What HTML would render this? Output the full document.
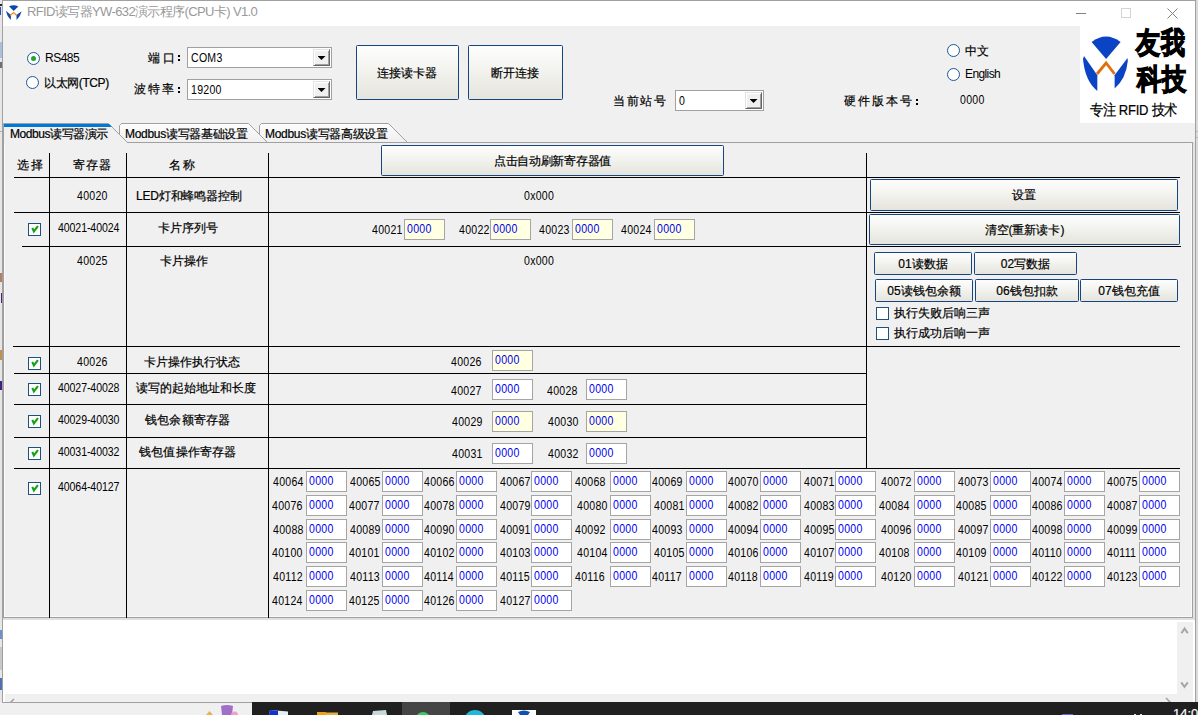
<!DOCTYPE html><html><head><meta charset="utf-8"><title>RFID</title><style>
*{margin:0;padding:0;box-sizing:border-box}
html,body{width:1198px;height:715px;overflow:hidden;background:#f0f0f0}
body{position:relative;font-family:"Liberation Sans",sans-serif;font-size:12px;color:#000;-webkit-text-stroke-width:0.2px}
div{position:absolute}
svg{position:absolute}
.t{white-space:nowrap;line-height:12px;font-size:12px}
.d{margin-left:0.2px;white-space:nowrap;line-height:12px;font-size:12px;letter-spacing:0.3px;-webkit-text-stroke-width:0;transform:scaleX(0.88);transform-origin:0 0}
.v{display:inline-block;letter-spacing:0.3px;transform:scaleX(0.88);transform-origin:0 0}
.btn{border:1px solid #17457f;border-radius:1.5px;background:linear-gradient(#fdfdfd,#f3f3ef 45%,#e5e4dd);text-align:center;white-space:nowrap;font-size:12px}
.inp,.inpy{border:1px solid #a5a5a5;background:#fff;color:#0000f0;font-size:12px;line-height:12px;padding:3px 0 0 2px;-webkit-text-stroke-width:0}
.inpy{background:#ffffe1}
.cb{width:13px;height:13px;border:1px solid #1c5180;background:#fff}
.cb svg{left:1px;top:1px}
.rd{width:13px;height:13px;border:1px solid #1d5798;border-radius:50%;background:#fff}
.combo{border:1px solid #a0a0a0;background:#fff}
.dd{width:17px;height:17px;background:#f0f0f0;border-top:1px solid #e3e3e3;border-left:1px solid #e3e3e3;border-right:1px solid #646464;border-bottom:1px solid #646464;box-shadow:inset 1px 1px 0 #fff,inset -1px -1px 0 #a0a0a0}
.dd:after{content:"";position:absolute;left:3.5px;top:6px;width:8px;height:4px;background:#000;clip-path:polygon(0 0,100% 0,50% 100%)}
</style></head><body>
<div style="left:0px;top:0px;width:3px;height:702px;background:#e6e6e6"></div>
<div style="left:0px;top:4px;width:2px;height:2px;background:#2a2a2a"></div>
<div style="left:0px;top:7px;width:1px;height:8px;background:#2050b0"></div>
<div style="left:0px;top:42px;width:2px;height:16px;background:#a8c0e0"></div>
<div style="left:0px;top:62px;width:2px;height:6px;background:#707070"></div>
<div style="left:0px;top:131px;width:3px;height:1px;background:#b0b0b0"></div>
<div style="left:0px;top:273px;width:2px;height:9px;background:#b08060"></div>
<div style="left:1px;top:293px;width:1px;height:10px;background:#502070"></div>
<div style="left:0px;top:350px;width:2px;height:10px;background:#c09050"></div>
<div style="left:0px;top:381px;width:2px;height:9px;background:#402080"></div>
<div style="left:0px;top:630px;width:2px;height:9px;background:#7090c8"></div>
<div style="left:0px;top:647px;width:2px;height:23px;background:#c8c8c8"></div>
<div style="left:0px;top:678px;width:2px;height:12px;background:#5070b0"></div>
<div style="left:2px;top:0px;width:1194px;height:703px;border:1px solid #a0a0a0;background:#f0f0f0"></div>
<div style="left:3px;top:1px;width:1192px;height:25px;background:#fff"></div>
<div style="left:1196px;top:0px;width:2px;height:702px;background:#dadada"></div>
<div style="left:1196px;top:131px;width:2px;height:1px;background:#b8b8b8"></div>
<div style="left:1196px;top:137px;width:2px;height:1px;background:#b8b8b8"></div>
<svg style="left:5px;top:4px" width="17" height="17" viewBox="0 0 17 17">
<path d="M4 2.3 Q8.7 0.2 13.3 2.4 L8.7 7 Z" fill="#0b4aa8"/>
<path d="M0.8 6.8 L6 11 L5.8 16 Q2 12.5 0.8 6.8 Z" fill="#0b4aa8"/>
<path d="M16.6 7.2 L11.4 11 L11.6 16 Q15.4 12.5 16.6 7.2 Z" fill="#0b4aa8"/>
<path d="M5.2 11.5 L8.5 8.6 L11.8 11.5" stroke="#ef8a1e" stroke-width="1.2" fill="none"/>
</svg>
<div class="t" style="left:27px;top:5px;color:#999;-webkit-text-stroke-width:0;font-size:13px;line-height:14px;letter-spacing:-0.62px">RFID读写器YW-632演示程序(CPU卡) V1.0</div>
<div style="left:1076px;top:13px;width:10px;height:1px;background:#808080"></div>
<div style="left:1121px;top:8px;width:10px;height:10px;border:1px solid #d4d4d4"></div>
<svg style="left:1167px;top:8px" width="11" height="11" viewBox="0 0 11 11">
<path d="M0.5 0.5 L10.5 10.5 M10.5 0.5 L0.5 10.5" stroke="#808080" stroke-width="1"/></svg>
<div class="rd" style="left:27px;top:52px;width:13px;height:13px;"><div style="left:3px;top:3px;width:5px;height:5px;border-radius:50%;background:#22a52a"></div></div>
<div class="t" style="left:45px;top:52px;letter-spacing:-0.5px;-webkit-text-stroke-width:0">RS485</div>
<div class="rd" style="left:26px;top:76px;width:13px;height:13px;"></div>
<div class="t" style="left:44px;top:77px;letter-spacing:-0.4px">以太网(TCP)</div>
<div class="t" style="left:148px;top:52px;letter-spacing:2.5px">端口</div>
<div style="left:178px;top:55px;width:2px;height:2px;background:#000"></div>
<div style="left:178px;top:59px;width:2px;height:2px;background:#000"></div>
<div class="t" style="left:134px;top:83px;letter-spacing:2px">波特率</div>
<div style="left:178px;top:87px;width:2px;height:2px;background:#000"></div>
<div style="left:178px;top:91px;width:2px;height:2px;background:#000"></div>
<div class="combo" style="left:187px;top:47px;width:145px;height:21px;"><div class="d" style="left:3px;top:4px">COM3</div><div class="dd" style="left:125px;top:1px"></div></div>
<div class="combo" style="left:187px;top:79px;width:145px;height:21px;"><div class="d" style="left:3px;top:4px">19200</div><div class="dd" style="left:125px;top:1px"></div></div>
<div class="btn" style="left:356px;top:45px;width:103px;height:55px;line-height:54px;padding-right:2px">连接读卡器</div>
<div class="btn" style="left:468px;top:45px;width:95px;height:55px;line-height:54px;padding-right:2px">断开连接</div>
<div class="t" style="left:613px;top:95px;letter-spacing:1.7px">当前站号</div>
<div class="combo" style="left:675px;top:90px;width:89px;height:21px;"><div class="d" style="left:3px;top:4px">0</div><div class="dd" style="left:69px;top:1px"></div></div>
<div class="rd" style="left:947px;top:44px;width:13px;height:13px;"></div>
<div class="t" style="left:965px;top:45px;">中文</div>
<div class="rd" style="left:947px;top:68px;width:13px;height:13px;"></div>
<div class="t" style="left:965px;top:68px;letter-spacing:-0.6px;-webkit-text-stroke-width:0">English</div>
<div class="t" style="left:844px;top:95px;letter-spacing:2px">硬件版本号</div>
<div style="left:916px;top:99px;width:2px;height:2px;background:#000"></div>
<div style="left:916px;top:103px;width:2px;height:2px;background:#000"></div>
<div class="d" style="left:960px;top:94px;">0000</div>
<div style="left:1080px;top:26px;width:115px;height:97px;background:#fff"></div>
<svg style="left:1080px;top:26px" width="60" height="70" viewBox="0 0 60 70">
<path d="M11.6 16.1 Q26 5 40.6 16.1 L26.1 32.9 Z" fill="#0a44c4"/>
<path d="M4 30 L17.3 49.3 L17.3 65 Q5 55 3 33 Z" fill="#0a44c4"/>
<path d="M47.5 32 L34.6 49.3 L34.6 62.5 Q46 53 47.8 35 Z" fill="#0a44c4"/>
<path d="M17 48 L26.1 37 L34.6 48" stroke="#e0700c" stroke-width="2.8" fill="none"/>
</svg>
<div class="t" style="left:1135.5px;top:28px;font-size:24px;line-height:24px;font-weight:700;letter-spacing:1px;-webkit-text-stroke:1px #000;transform-origin:0 0;transform:scaleY(1.25)">友我</div>
<div class="t" style="left:1136.5px;top:65px;font-size:24px;line-height:24px;font-weight:700;letter-spacing:1px;-webkit-text-stroke:1px #000;transform-origin:0 0;transform:scaleY(1.2)">科技</div>
<div class="t" style="left:1090px;top:104px;font-size:13px;line-height:14px;letter-spacing:-0.25px;transform-origin:0 100%;transform:scaleY(1.13)">专注 RFID 技术</div>
<div style="left:3px;top:142px;width:1190px;height:476px;border:1px solid #a0a0a0;border-top:none;background:#f0f0f0"></div>
<div style="left:4px;top:143px;width:1188px;height:474px;border-left:1px solid #fafafa;border-right:1px solid #fafafa;border-bottom:1px solid #fafafa"></div>
<div style="left:1193px;top:142px;width:2px;height:478px;background:#e3e3e3"></div>
<svg style="left:0;top:118px" width="420" height="26" viewBox="0 118 420 26">
<defs><linearGradient id="tg" x1="0" y1="0" x2="0" y2="1"><stop offset="0" stop-color="#fdfdfd"/><stop offset="1" stop-color="#efefef"/></linearGradient></defs>
<path d="M259.5 142.5 L259.5 125.5 L261.5 123.5 L388.5 123.5 L407.5 142.5" fill="url(#tg)" stroke="#a0a0a0" stroke-width="1"/>
<path d="M119.5 142.5 L119.5 125.5 L121.5 123.5 L248.5 123.5 L267.5 142.5" fill="url(#tg)" stroke="#a0a0a0" stroke-width="1"/>
<path d="M3.5 143 L3.5 123.5 L108.5 123.5 L127.5 142.5 L127.5 143 Z" fill="#f0f0f0" stroke="none"/>
<path d="M3.5 143 L3.5 123.5 L108.5 123.5 L127.5 142.5" fill="none" stroke="#a0a0a0" stroke-width="1"/>
<path d="M4 124 L109 124 L112 127 L4 127 Z" fill="#0078d7"/>
</svg>
<div style="left:127px;top:142px;width:1066px;height:1px;background:#a0a0a0"></div>
<div class="t" style="left:10px;top:128px;letter-spacing:-0.45px">Modbus读写器演示</div>
<div class="t" style="left:125px;top:128px;letter-spacing:-0.3px">Modbus读写器基础设置</div>
<div class="t" style="left:265px;top:128px;letter-spacing:-0.3px">Modbus读写器高级设置</div>
<div style="left:49px;top:153px;width:1px;height:465px;background:#000"></div>
<div style="left:126px;top:153px;width:1px;height:465px;background:#000"></div>
<div style="left:268px;top:153px;width:1px;height:465px;background:#000"></div>
<div style="left:866px;top:153px;width:1px;height:316px;background:#000"></div>
<div style="left:14px;top:177px;width:1166px;height:1px;background:#000"></div>
<div style="left:14px;top:212px;width:1166px;height:1px;background:#000"></div>
<div style="left:22px;top:246px;width:1159px;height:1px;background:#000"></div>
<div style="left:13px;top:346px;width:1167px;height:1px;background:#000"></div>
<div style="left:14px;top:373px;width:853px;height:1px;background:#000"></div>
<div style="left:14px;top:404px;width:853px;height:1px;background:#000"></div>
<div style="left:14px;top:437px;width:853px;height:1px;background:#000"></div>
<div style="left:14px;top:468px;width:1166px;height:1px;background:#000"></div>
<div class="t" style="left:17px;top:159px;letter-spacing:2px">选择</div>
<div class="t" style="left:73px;top:159px;letter-spacing:1.2px">寄存器</div>
<div class="t" style="left:169px;top:159px;letter-spacing:2px">名称</div>
<div class="btn" style="left:381px;top:145px;width:343px;height:31px;line-height:30px;letter-spacing:-0.3px">点击自动刷新寄存器值</div>
<div class="d" style="left:77px;top:190px;">40020</div>
<div class="t" style="left:136px;top:190px;letter-spacing:-0.2px">LED灯和蜂鸣器控制</div>
<div class="d" style="left:524px;top:190px;">0x000</div>
<div class="btn" style="left:870px;top:179px;width:308px;height:32px;line-height:31px">设置</div>
<div class="cb" style="left:28px;top:223px;width:13px;height:13px;"><svg width="11" height="11" viewBox="0 0 11 11"><path d="M2.3 2.9 L3.9 6.5 L7.9 1.2" stroke="#16a016" stroke-width="2.1" fill="none"/></svg></div>
<div class="d" style="left:58px;top:222px;letter-spacing:-0.1px">40021-40024</div>
<div class="t" style="left:158px;top:222px;">卡片序列号</div>
<div class="d" style="left:372px;top:224px;">40021</div>
<div class="inpy" style="left:404px;top:219px;width:41px;height:21px;"><span class="v">0000</span></div>
<div class="d" style="left:459px;top:224px;">40022</div>
<div class="inpy" style="left:490px;top:219px;width:41px;height:21px;"><span class="v">0000</span></div>
<div class="d" style="left:539px;top:224px;">40023</div>
<div class="inpy" style="left:572px;top:219px;width:41px;height:21px;"><span class="v">0000</span></div>
<div class="d" style="left:621px;top:224px;">40024</div>
<div class="inpy" style="left:654px;top:219px;width:41px;height:21px;"><span class="v">0000</span></div>
<div class="btn" style="left:869px;top:214px;width:311px;height:31px;line-height:30px">清空(重新读卡)</div>
<div class="d" style="left:77px;top:255px;">40025</div>
<div class="t" style="left:160px;top:255px;">卡片操作</div>
<div class="d" style="left:524px;top:255px;">0x000</div>
<div class="btn" style="left:874px;top:252px;width:98px;height:23px;line-height:22px">01读数据</div>
<div class="btn" style="left:974px;top:252px;width:103px;height:23px;line-height:22px">02写数据</div>
<div class="btn" style="left:875px;top:279px;width:98px;height:23px;line-height:22px">05读钱包余额</div>
<div class="btn" style="left:975px;top:279px;width:104px;height:23px;line-height:22px">06钱包扣款</div>
<div class="btn" style="left:1080px;top:279px;width:98px;height:23px;line-height:22px">07钱包充值</div>
<div class="cb" style="left:876px;top:307px;width:13px;height:13px;"></div>
<div class="t" style="left:894px;top:307px;">执行失败后响三声</div>
<div class="cb" style="left:876px;top:327px;width:13px;height:13px;"></div>
<div class="t" style="left:894px;top:327px;">执行成功后响一声</div>
<div class="cb" style="left:28px;top:357px;width:13px;height:13px;"><svg width="11" height="11" viewBox="0 0 11 11"><path d="M2.3 2.9 L3.9 6.5 L7.9 1.2" stroke="#16a016" stroke-width="2.1" fill="none"/></svg></div>
<div class="d" style="left:77px;top:356px;">40026</div>
<div class="t" style="left:144px;top:356px;">卡片操作执行状态</div>
<div class="d" style="left:451px;top:356px;">40026</div>
<div class="inpy" style="left:492px;top:350px;width:41px;height:21px;"><span class="v">0000</span></div>
<div class="cb" style="left:28px;top:383px;width:13px;height:13px;"><svg width="11" height="11" viewBox="0 0 11 11"><path d="M2.3 2.9 L3.9 6.5 L7.9 1.2" stroke="#16a016" stroke-width="2.1" fill="none"/></svg></div>
<div class="d" style="left:58px;top:382px;letter-spacing:-0.1px">40027-40028</div>
<div class="t" style="left:136px;top:382px;">读写的起始地址和长度</div>
<div class="d" style="left:451px;top:385px;">40027</div>
<div class="inp" style="left:492px;top:379px;width:41px;height:21px;"><span class="v">0000</span></div>
<div class="d" style="left:547px;top:385px;">40028</div>
<div class="inp" style="left:586px;top:379px;width:41px;height:21px;"><span class="v">0000</span></div>
<div class="cb" style="left:28px;top:415px;width:13px;height:13px;"><svg width="11" height="11" viewBox="0 0 11 11"><path d="M2.3 2.9 L3.9 6.5 L7.9 1.2" stroke="#16a016" stroke-width="2.1" fill="none"/></svg></div>
<div class="d" style="left:58px;top:414px;letter-spacing:-0.1px">40029-40030</div>
<div class="t" style="left:145px;top:414px;letter-spacing:0.2px">钱包余额寄存器</div>
<div class="d" style="left:452px;top:416px;">40029</div>
<div class="inpy" style="left:492px;top:411px;width:41px;height:21px;"><span class="v">0000</span></div>
<div class="d" style="left:548px;top:416px;">40030</div>
<div class="inpy" style="left:586px;top:411px;width:41px;height:21px;"><span class="v">0000</span></div>
<div class="cb" style="left:28px;top:447px;width:13px;height:13px;"><svg width="11" height="11" viewBox="0 0 11 11"><path d="M2.3 2.9 L3.9 6.5 L7.9 1.2" stroke="#16a016" stroke-width="2.1" fill="none"/></svg></div>
<div class="d" style="left:58px;top:446px;letter-spacing:-0.1px">40031-40032</div>
<div class="t" style="left:139px;top:446px;letter-spacing:0.2px">钱包值操作寄存器</div>
<div class="d" style="left:452px;top:448px;">40031</div>
<div class="inp" style="left:492px;top:443px;width:41px;height:21px;"><span class="v">0000</span></div>
<div class="d" style="left:548px;top:448px;">40032</div>
<div class="inp" style="left:586px;top:443px;width:41px;height:21px;"><span class="v">0000</span></div>
<div class="cb" style="left:28px;top:482px;width:13px;height:13px;"><svg width="11" height="11" viewBox="0 0 11 11"><path d="M2.3 2.9 L3.9 6.5 L7.9 1.2" stroke="#16a016" stroke-width="2.1" fill="none"/></svg></div>
<div class="d" style="left:58px;top:481px;letter-spacing:-0.1px">40064-40127</div>
<div class="d" style="left:273.0px;top:476px">40064</div>
<div class="inp" style="left:306px;top:471px;width:41px;height:21px;"><span class="v">0000</span></div>
<div class="d" style="left:350.2px;top:476px">40065</div>
<div class="inp" style="left:382px;top:471px;width:41px;height:21px;"><span class="v">0000</span></div>
<div class="d" style="left:424.2px;top:476px">40066</div>
<div class="inp" style="left:456px;top:471px;width:41px;height:21px;"><span class="v">0000</span></div>
<div class="d" style="left:499.5px;top:476px">40067</div>
<div class="inp" style="left:531px;top:471px;width:41px;height:21px;"><span class="v">0000</span></div>
<div class="d" style="left:575.1px;top:476px">40068</div>
<div class="inp" style="left:610px;top:471px;width:41px;height:21px;"><span class="v">0000</span></div>
<div class="d" style="left:652.0px;top:476px">40069</div>
<div class="inp" style="left:686px;top:471px;width:41px;height:21px;"><span class="v">0000</span></div>
<div class="d" style="left:728.1px;top:476px">40070</div>
<div class="inp" style="left:760px;top:471px;width:41px;height:21px;"><span class="v">0000</span></div>
<div class="d" style="left:803.4px;top:476px">40071</div>
<div class="inp" style="left:835px;top:471px;width:41px;height:21px;"><span class="v">0000</span></div>
<div class="d" style="left:881.2px;top:476px">40072</div>
<div class="inp" style="left:914px;top:471px;width:41px;height:21px;"><span class="v">0000</span></div>
<div class="d" style="left:957.9px;top:476px">40073</div>
<div class="inp" style="left:990px;top:471px;width:41px;height:21px;"><span class="v">0000</span></div>
<div class="d" style="left:1032.1px;top:476px">40074</div>
<div class="inp" style="left:1064px;top:471px;width:41px;height:21px;"><span class="v">0000</span></div>
<div class="d" style="left:1106.9px;top:476px">40075</div>
<div class="inp" style="left:1139px;top:471px;width:41px;height:21px;"><span class="v">0000</span></div>
<div class="d" style="left:271.7px;top:500px">40076</div>
<div class="inp" style="left:306px;top:495px;width:41px;height:21px;"><span class="v">0000</span></div>
<div class="d" style="left:348.4px;top:500px">40077</div>
<div class="inp" style="left:382px;top:495px;width:41px;height:21px;"><span class="v">0000</span></div>
<div class="d" style="left:424.2px;top:500px">40078</div>
<div class="inp" style="left:456px;top:495px;width:41px;height:21px;"><span class="v">0000</span></div>
<div class="d" style="left:499.5px;top:500px">40079</div>
<div class="inp" style="left:531px;top:495px;width:41px;height:21px;"><span class="v">0000</span></div>
<div class="d" style="left:577.2px;top:500px">40080</div>
<div class="inp" style="left:610px;top:495px;width:41px;height:21px;"><span class="v">0000</span></div>
<div class="d" style="left:654.1px;top:500px">40081</div>
<div class="inp" style="left:686px;top:495px;width:41px;height:21px;"><span class="v">0000</span></div>
<div class="d" style="left:728.1px;top:500px">40082</div>
<div class="inp" style="left:760px;top:495px;width:41px;height:21px;"><span class="v">0000</span></div>
<div class="d" style="left:803.4px;top:500px">40083</div>
<div class="inp" style="left:835px;top:495px;width:41px;height:21px;"><span class="v">0000</span></div>
<div class="d" style="left:879.1px;top:500px">40084</div>
<div class="inp" style="left:914px;top:495px;width:41px;height:21px;"><span class="v">0000</span></div>
<div class="d" style="left:956.0px;top:500px">40085</div>
<div class="inp" style="left:990px;top:495px;width:41px;height:21px;"><span class="v">0000</span></div>
<div class="d" style="left:1032.1px;top:500px">40086</div>
<div class="inp" style="left:1064px;top:495px;width:41px;height:21px;"><span class="v">0000</span></div>
<div class="d" style="left:1106.9px;top:500px">40087</div>
<div class="inp" style="left:1139px;top:495px;width:41px;height:21px;"><span class="v">0000</span></div>
<div class="d" style="left:273.0px;top:524px">40088</div>
<div class="inp" style="left:306px;top:519px;width:41px;height:21px;"><span class="v">0000</span></div>
<div class="d" style="left:350.2px;top:524px">40089</div>
<div class="inp" style="left:382px;top:519px;width:41px;height:21px;"><span class="v">0000</span></div>
<div class="d" style="left:424.2px;top:524px">40090</div>
<div class="inp" style="left:456px;top:519px;width:41px;height:21px;"><span class="v">0000</span></div>
<div class="d" style="left:499.5px;top:524px">40091</div>
<div class="inp" style="left:531px;top:519px;width:41px;height:21px;"><span class="v">0000</span></div>
<div class="d" style="left:575.1px;top:524px">40092</div>
<div class="inp" style="left:610px;top:519px;width:41px;height:21px;"><span class="v">0000</span></div>
<div class="d" style="left:652.0px;top:524px">40093</div>
<div class="inp" style="left:686px;top:519px;width:41px;height:21px;"><span class="v">0000</span></div>
<div class="d" style="left:728.1px;top:524px">40094</div>
<div class="inp" style="left:760px;top:519px;width:41px;height:21px;"><span class="v">0000</span></div>
<div class="d" style="left:803.4px;top:524px">40095</div>
<div class="inp" style="left:835px;top:519px;width:41px;height:21px;"><span class="v">0000</span></div>
<div class="d" style="left:881.2px;top:524px">40096</div>
<div class="inp" style="left:914px;top:519px;width:41px;height:21px;"><span class="v">0000</span></div>
<div class="d" style="left:957.9px;top:524px">40097</div>
<div class="inp" style="left:990px;top:519px;width:41px;height:21px;"><span class="v">0000</span></div>
<div class="d" style="left:1032.1px;top:524px">40098</div>
<div class="inp" style="left:1064px;top:519px;width:41px;height:21px;"><span class="v">0000</span></div>
<div class="d" style="left:1106.9px;top:524px">40099</div>
<div class="inp" style="left:1139px;top:519px;width:41px;height:21px;"><span class="v">0000</span></div>
<div class="d" style="left:271.7px;top:547px">40100</div>
<div class="inp" style="left:306px;top:542px;width:41px;height:21px;"><span class="v">0000</span></div>
<div class="d" style="left:348.4px;top:547px">40101</div>
<div class="inp" style="left:382px;top:542px;width:41px;height:21px;"><span class="v">0000</span></div>
<div class="d" style="left:424.2px;top:547px">40102</div>
<div class="inp" style="left:456px;top:542px;width:41px;height:21px;"><span class="v">0000</span></div>
<div class="d" style="left:499.5px;top:547px">40103</div>
<div class="inp" style="left:531px;top:542px;width:41px;height:21px;"><span class="v">0000</span></div>
<div class="d" style="left:577.2px;top:547px">40104</div>
<div class="inp" style="left:610px;top:542px;width:41px;height:21px;"><span class="v">0000</span></div>
<div class="d" style="left:654.1px;top:547px">40105</div>
<div class="inp" style="left:686px;top:542px;width:41px;height:21px;"><span class="v">0000</span></div>
<div class="d" style="left:728.1px;top:547px">40106</div>
<div class="inp" style="left:760px;top:542px;width:41px;height:21px;"><span class="v">0000</span></div>
<div class="d" style="left:803.4px;top:547px">40107</div>
<div class="inp" style="left:835px;top:542px;width:41px;height:21px;"><span class="v">0000</span></div>
<div class="d" style="left:879.1px;top:547px">40108</div>
<div class="inp" style="left:914px;top:542px;width:41px;height:21px;"><span class="v">0000</span></div>
<div class="d" style="left:956.0px;top:547px">40109</div>
<div class="inp" style="left:990px;top:542px;width:41px;height:21px;"><span class="v">0000</span></div>
<div class="d" style="left:1032.1px;top:547px">40110</div>
<div class="inp" style="left:1064px;top:542px;width:41px;height:21px;"><span class="v">0000</span></div>
<div class="d" style="left:1106.9px;top:547px">40111</div>
<div class="inp" style="left:1139px;top:542px;width:41px;height:21px;"><span class="v">0000</span></div>
<div class="d" style="left:273.0px;top:571px">40112</div>
<div class="inp" style="left:306px;top:566px;width:41px;height:21px;"><span class="v">0000</span></div>
<div class="d" style="left:350.2px;top:571px">40113</div>
<div class="inp" style="left:382px;top:566px;width:41px;height:21px;"><span class="v">0000</span></div>
<div class="d" style="left:424.2px;top:571px">40114</div>
<div class="inp" style="left:456px;top:566px;width:41px;height:21px;"><span class="v">0000</span></div>
<div class="d" style="left:499.5px;top:571px">40115</div>
<div class="inp" style="left:531px;top:566px;width:41px;height:21px;"><span class="v">0000</span></div>
<div class="d" style="left:575.1px;top:571px">40116</div>
<div class="inp" style="left:610px;top:566px;width:41px;height:21px;"><span class="v">0000</span></div>
<div class="d" style="left:652.0px;top:571px">40117</div>
<div class="inp" style="left:686px;top:566px;width:41px;height:21px;"><span class="v">0000</span></div>
<div class="d" style="left:728.1px;top:571px">40118</div>
<div class="inp" style="left:760px;top:566px;width:41px;height:21px;"><span class="v">0000</span></div>
<div class="d" style="left:803.4px;top:571px">40119</div>
<div class="inp" style="left:835px;top:566px;width:41px;height:21px;"><span class="v">0000</span></div>
<div class="d" style="left:881.2px;top:571px">40120</div>
<div class="inp" style="left:914px;top:566px;width:41px;height:21px;"><span class="v">0000</span></div>
<div class="d" style="left:957.9px;top:571px">40121</div>
<div class="inp" style="left:990px;top:566px;width:41px;height:21px;"><span class="v">0000</span></div>
<div class="d" style="left:1032.1px;top:571px">40122</div>
<div class="inp" style="left:1064px;top:566px;width:41px;height:21px;"><span class="v">0000</span></div>
<div class="d" style="left:1106.9px;top:571px">40123</div>
<div class="inp" style="left:1139px;top:566px;width:41px;height:21px;"><span class="v">0000</span></div>
<div class="d" style="left:271.7px;top:595px">40124</div>
<div class="inp" style="left:306px;top:590px;width:41px;height:21px;"><span class="v">0000</span></div>
<div class="d" style="left:348.4px;top:595px">40125</div>
<div class="inp" style="left:382px;top:590px;width:41px;height:21px;"><span class="v">0000</span></div>
<div class="d" style="left:424.2px;top:595px">40126</div>
<div class="inp" style="left:456px;top:590px;width:41px;height:21px;"><span class="v">0000</span></div>
<div class="d" style="left:499.5px;top:595px">40127</div>
<div class="inp" style="left:531px;top:590px;width:41px;height:21px;"><span class="v">0000</span></div>
<div style="left:3px;top:618px;width:1192px;height:2px;background:#e0e0e0"></div>
<div style="left:3px;top:620px;width:1192px;height:82px;background:#fff"></div>
<div style="left:1177px;top:622px;width:16px;height:80px;background:#f0f0f0"></div>
<svg style="left:1180px;top:626px" width="10" height="9" viewBox="0 0 10 9"><path d="M1.4 7.2 L4.6 2.6 L7.8 7.2" stroke="#a6a6a6" stroke-width="2" fill="none"/></svg>
<svg style="left:1180px;top:681px" width="10" height="9" viewBox="0 0 10 9"><path d="M1.2 1.4 L4.5 5.9 L7.8 1.4" stroke="#a6a6a6" stroke-width="2" fill="none"/></svg>
<div style="left:5px;top:694px;width:1188px;height:8px;background:#f0f0f0"></div>
<svg style="left:8px;top:696px" width="10" height="7" viewBox="0 0 10 7"><path d="M2 7 L6 3" stroke="#a6a6a6" stroke-width="1.7" fill="none"/></svg>
<svg style="left:1163px;top:696px" width="10" height="7" viewBox="0 0 10 7"><path d="M3 2 L8 7" stroke="#a6a6a6" stroke-width="1.7" fill="none"/></svg>
<div style="left:0px;top:703px;width:252px;height:12px;background:#f0f0f0"></div>
<div style="left:3px;top:702px;width:249px;height:1px;background:#a0a0a0"></div>
<svg style="left:200px;top:703px" width="45" height="12" viewBox="0 0 45 12">
<path d="M6 12 L9.5 8 L13 12 Z" fill="#e8b050"/>
<path d="M21 3 Q27 1 33 3 L32 12 L22 12 Z" fill="#a070c8"/>
<circle cx="34.5" cy="12" r="3.5" fill="#f0a0d0"/>
</svg>
<div style="left:252px;top:702px;width:946px;height:13px;background:#202020"></div>
<div style="left:402px;top:702px;width:48px;height:13px;background:#454545"></div>
<svg style="left:252px;top:702px" width="946" height="13" viewBox="252 702 946 13">
<path d="M270 710 L288 711.5 L288 715 L269 715 Z" fill="#e8eef8"/>
<path d="M270 710 L278 710.7 L278 715 L269 715 Z" fill="#1030d0"/>
<rect x="317" y="712.5" width="21" height="3" fill="#e6b040"/>
<rect x="317" y="712" width="9" height="3" fill="#f0a010"/>
<path d="M373 711 L386 710 L387 715 L372 715 Z" fill="#c8d8d8"/>
<circle cx="423" cy="719.5" r="7.5" fill="#3ccc60"/>
<circle cx="475" cy="721" r="11" fill="#20b8d8"/>
<rect x="512" y="710" width="24" height="5" fill="#fff"/>
<path d="M518 712 Q524 709 530 712 L528 715 L520 715 Z" fill="#1050b0"/>
<rect x="1062" y="714" width="11" height="1" fill="#5a6af0"/>
<rect x="1134" y="714" width="2" height="1" fill="#ddd"/>
<rect x="1140" y="714" width="2" height="1" fill="#ddd"/>
</svg>
<div class="t" style="left:1173px;top:707px;color:#fff;font-size:13px;line-height:13px">14:07</div>
</body></html>
